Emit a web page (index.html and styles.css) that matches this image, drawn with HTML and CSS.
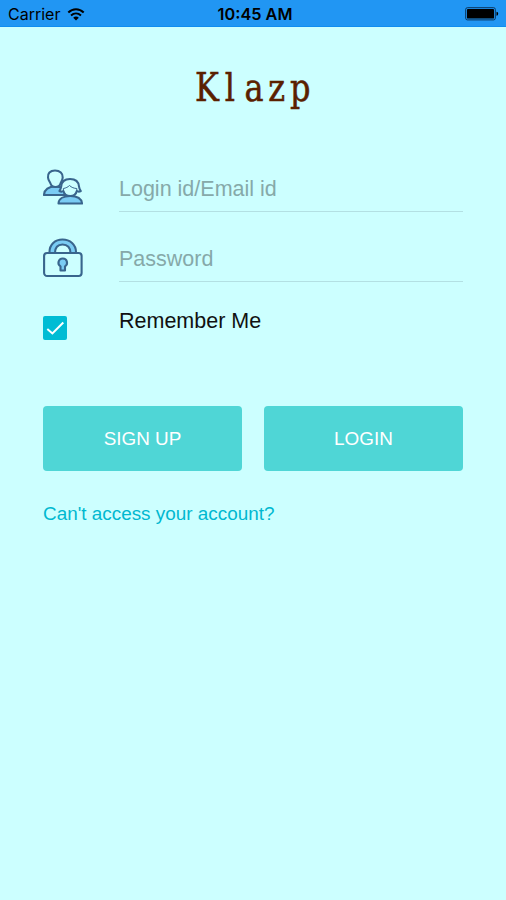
FILE: index.html
```html
<!DOCTYPE html>
<html lang="en">
<head>
<meta charset="utf-8">
<title>Klazp</title>
<link rel="stylesheet" href="styles.css">
</head>
<body>
<header class="status">
  <div class="carrier"><span>Carrier</span>
    <svg class="wifi" width="18" height="13" viewBox="0 0 18 13" fill="none" stroke="#000" stroke-width="2"><path d="M1.3 4.5C5.7.2 12.3.2 16.7 4.5M4 7.5C7 4.8 11 4.8 14 7.5"/><path d="M6.2 9.7C7.8 8.2 10.2 8.2 11.8 9.7L9 12.5Z" fill="#000" stroke="none"/></svg>
  </div>
  <time class="time">10:45 AM</time>
  <svg class="battery" width="34" height="14" viewBox="0 0 34 14"><rect x=".7" y=".7" width="29.6" height="12.2" rx="1.7" fill="none" stroke="#08345d" stroke-width="1"/><rect x="2" y="2" width="27" height="9.6" rx=".7"/><path d="M31.5 4.8Q33.2 5 33.2 6.8T31.5 8.8Z"/></svg>
</header>
<main class="login">
  <svg class="logo" width="146" height="64" viewBox="-10 -7 146 64"><text transform="scale(.8 1)" x="21.2 50 80 108.4 137.8" y="37">Klazp</text></svg>
  <form class="form">
    <div class="row">
      <svg class="icon" width="40" height="40" viewBox="0 -1 40 40" stroke="#38658d" stroke-width="2.1" stroke-linejoin="round" stroke-linecap="round">
        <path d="M1 26C1.2 20.5 6 17.5 12 17.5S22.5 20 23 26Z" fill="#7accf4"/>
        <path d="M12 1.5C7 1.5 4.5 4.5 5 8.5C5.3 11.5 6.8 12.5 7.5 14.5C8.2 17 10 18 12.5 18S16.8 17 17.5 14.5C18.2 12.5 19.5 11.5 19.7 8.5C20 4.5 17 1.5 12 1.5Z" fill="#cff"/>
        <path d="M15.5 34.5C15.7 29.5 21 27 27.3 27S38.5 29.5 39 34.5Z" fill="#7accf4"/>
        <path d="M27 10C20.5 10 18.5 14 18.2 17.5C18 19.5 17.2 20.8 16.4 22C17.8 22.8 19.2 22.8 20.4 22C21.2 25.5 24 27 27.2 27S33 25.5 33.8 22C35 22.8 36.5 22.8 37.8 22C37 20.8 36.2 19.5 36 17.5C35.7 14 33.5 10 27 10Z" fill="#cff"/>
        <path d="M20.4 22V19.5C23 19 25 18 26.5 16.5C28.5 18.4 31 19.4 33.8 19.5V22" fill="none" stroke-width="1"/>
      </svg>
      <input class="field" type="text" placeholder="Login id/Email id">
    </div>
    <div class="row">
      <svg class="icon" width="40" height="40" viewBox="0 0 40 40" stroke="#38658d" stroke-width="2.1" stroke-linejoin="round">
        <path d="M6.5 15V14C6.5 6.5 12 1.5 19.5 1.5S33 6.5 33 14V15H27.5C27.5 9.5 24.5 6.5 19.5 6.5S12 9.5 12 15Z" fill="#7accf4"/>
        <rect x="1.1" y="15" width="37.5" height="23" rx="3" fill="#cff"/>
        <path d="M19.7 20.5A4.2 4.2 0 0 0 17.5 28.3V32.5H22V28.3A4.2 4.2 0 0 0 19.7 20.5Z" fill="#7accf4"/>
      </svg>
      <input class="field" type="password" placeholder="Password">
    </div>
    <label class="remember">
      <svg class="check" width="24" height="24" viewBox="0 0 24 24"><rect width="24" height="24" rx="2" fill="#00bcd4"/><path d="M4.3 13L9.4 17.5L20.3 6.5" fill="none" stroke="#fff" stroke-width="2"/></svg>
      <span>Remember Me</span>
    </label>
    <div class="actions"><button type="button">SIGN UP</button><button type="button">LOGIN</button></div>
    <a class="help">Can't access your account?</a>
  </form>
</main>
</body>
</html>
```

FILE: styles.css
```css
* { box-sizing: border-box; }
body {
  margin: 0;
  min-height: 900px;
  background: #cff;
  font-family: "Liberation Sans", Arial, sans-serif;
}
.status {
  display: grid;
  grid-template-columns: 1fr auto 1fr;
  align-items: center;
  height: 27px;
  padding: 1px 7px 0 8px;
  background: #2196f3;
  border-bottom: 1px solid #108df0;
  color: #000;
  font: 16px/26px Inter, sans-serif;
}
.carrier { display: flex; align-items: center; gap: 7px; }
.time { font-weight: 600; font-size: 16.3px; padding-left: 3px; }
.battery { justify-self: end; }
.login { padding: 30px 43px 0; }
.logo { display: block; margin: 0 auto; }
.logo text {
  font: 40px "DejaVu Serif", serif;
  fill: #5a2000;
  stroke: #5a2000;
  stroke-width: .6;
  text-anchor: middle;
}
.form { padding-top: 41px; }
.row { display: flex; height: 70px; padding-top: 6px; }
.icon { width: 40px; height: 40px; margin-right: 36px; flex: none; }
.field {
  flex: 1;
  min-width: 0;
  height: 44px;
  padding: 0 0 1px;
  border: 0;
  border-bottom: 1px solid #b3e0e3;
  background: transparent;
  font: 21.5px "Liberation Sans", Arial, sans-serif;
  outline: 0;
}
.field::placeholder { color: #86a9a9; opacity: 1; }
.remember {
  display: flex;
  gap: 52px;
  height: 104px;
  color: #111;
  font-size: 21.5px;
  line-height: 26px;
  padding-top: 6px;
}
.check { margin-top: 8px; }
.actions { display: grid; grid-template-columns: 1fr 1fr; gap: 22px; }
.actions button {
  height: 65px;
  padding: 0;
  border: 0;
  border-radius: 4px;
  background: #4fd6d6;
  color: #fff;
  font: 18.9px "Liberation Sans", Arial, sans-serif;
}
.help {
  display: block;
  margin-top: 32px;
  color: #00b8d0;
  font-size: 18.9px;
  line-height: 22px;
}
```
